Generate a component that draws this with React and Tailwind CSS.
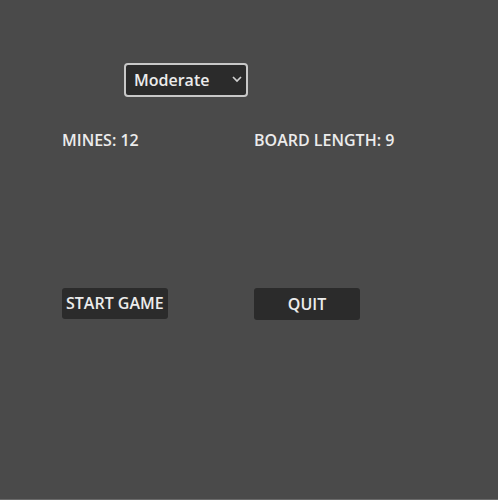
import React from "react";

export default function App() {
  return (
    <div
      className="w-[498px] h-[500px] bg-[#4a4a4a] text-[#ececec] text-[16px] font-semibold border-b border-[#6a6a6a]"
      style={{ fontFamily: '"Open Sans", "Noto Sans", sans-serif' }}
    >
      <div className="pt-[63px] pl-[124px]">
        <div className="relative w-[124px] h-[34px]">
          <select
            defaultValue="Moderate"
            className="appearance-none w-full h-full bg-[#2b2b2b] border-2 border-[#c8c8c8] rounded-[4px] pl-[8px] text-[16px] font-semibold text-[#ececec] outline-none"
            style={{ fontFamily: '"Open Sans", "Noto Sans", sans-serif' }}
          >
            <option>Easy</option>
            <option>Moderate</option>
            <option>Hard</option>
          </select>
          <svg
            className="absolute right-[6px] top-[13px] pointer-events-none"
            width="10"
            height="7"
            viewBox="0 0 10 7"
            fill="none"
          >
            <path d="M1 1 L5 5 L9 1" stroke="#d0d0d0" strokeWidth="1.7" />
          </svg>
        </div>
      </div>
      <div className="grid grid-cols-[192px_192px] pl-[62px] mt-[32px] leading-[22px]">
        <div>MINES: 12</div>
        <div>BOARD LENGTH: 9</div>
      </div>
      <div className="grid grid-cols-[192px_192px] pl-[62px] mt-[137px]">
        <div>
          <button className="w-[106px] h-[31px] bg-[#2b2b2b] rounded-[3px] px-[4px] text-left leading-[31px] whitespace-nowrap">
            START GAME
          </button>
        </div>
        <div>
          <button className="w-[106px] h-[32px] bg-[#2b2b2b] rounded-[3px] text-center leading-[32px]">
            QUIT
          </button>
        </div>
      </div>
    </div>
  );
}
